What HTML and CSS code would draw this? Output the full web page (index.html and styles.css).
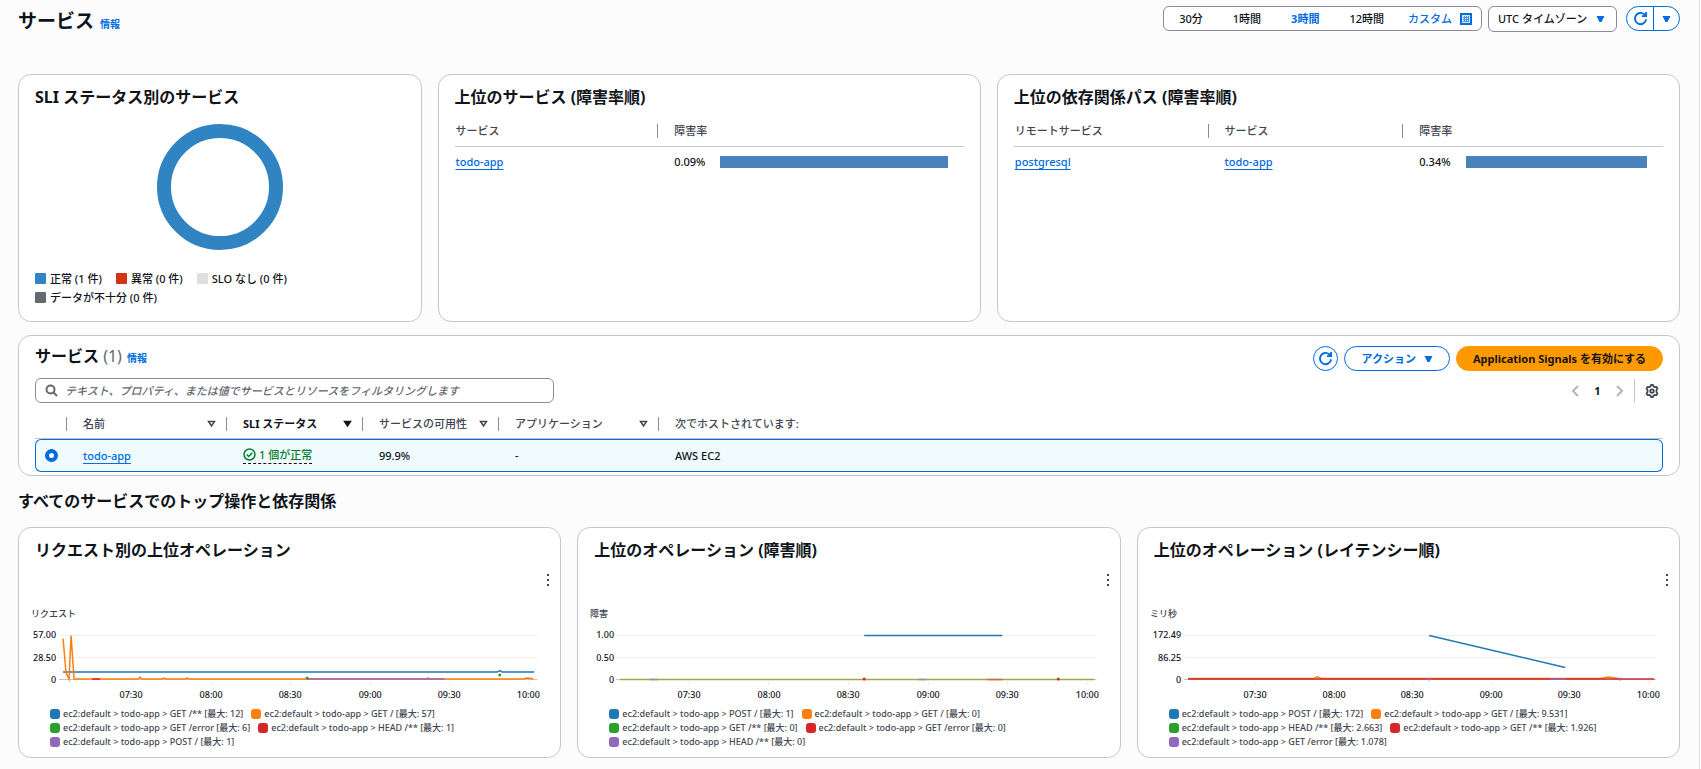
FILE: index.html
```html
<!DOCTYPE html>
<html lang="ja">
<head>
    <meta charset="UTF-8">
    <meta name="viewport" content="width=device-width, initial-scale=1.0">
    <title>サービス</title>
    <link rel="stylesheet" href="styles.css">
</head>
<body>
    <main class="page">
        <header class="topbar">
            <h1>サービス <a href="#" class="info">情報</a></h1>
            <div class="toolbar">
                <div class="segmented">
                    <button type="button">30分</button>
                    <button type="button">1時間</button>
                    <button type="button" class="active">3時間</button>
                    <button type="button">12時間</button>
                    <button type="button" class="custom">カスタム
                        <svg width="12" height="12" viewBox="0 0 12 12"><path d="M1 1h10v10H1z" fill="#d5e6fa" stroke="#006ce0" stroke-width="2"/><path d="M3 4.500h6M3 6.500h6M3 8.500h6M4.500 3v6M6.500 3v6M8.500 3v6" stroke="#4a94e8" fill="none"/></svg>
                    </button>
                </div>
                <div class="select">
                    <select aria-label="タイムゾーン">
                        <option>UTC タイムゾーン</option>
                    </select>
                    <svg class="caret" width="9" height="8" viewBox="0 0 9 8"><path d="M.5 1h8L5.500 7h-2z"/></svg>
                </div>
                <div class="split">
                    <button type="button" aria-label="更新">
                        <svg width="15" height="15" viewBox="0 0 16 16"><path d="M14 9a6 6 0 1 1-2-5.500L14 5.500M14 1v4.500H9.500"/></svg>
                    </button>
                    <button type="button" aria-label="更新間隔">
                        <svg class="caret" width="9" height="8" viewBox="0 0 9 8"><path d="M.5 1h8L5.500 7h-2z"/></svg>
                    </button>
                </div>
            </div>
        </header>

        <div class="grid summary">
            <section class="card span-3">
                <h2>SLI ステータス別のサービス</h2>
                <svg class="donut" width="126" height="126" viewBox="0 0 126 126"><circle cx="63" cy="63" r="56" fill="none" stroke="#3184c2" stroke-width="14"/></svg>
                <ul class="status-legend">
                    <li><i class="swatch ok"></i>正常 (1 件)</li>
                    <li><i class="swatch bad"></i>異常 (0 件)</li>
                    <li><i class="swatch none"></i>SLO なし (0 件)</li>
                    <li><i class="swatch missing"></i>データが不十分 (0 件)</li>
                </ul>
            </section>

            <section class="card span-4">
                <h2>上位のサービス (障害率順)</h2>
                <table class="mini">
                    <colgroup><col class="w40"><col></colgroup>
                    <thead>
                        <tr><th><div>サービス</div></th><th><div>障害率</div></th></tr>
                    </thead>
                    <tbody>
                        <tr>
                            <td><a href="#">todo-app</a></td>
                            <td><div class="rate">0.09%<span class="bar"></span></div></td>
                        </tr>
                    </tbody>
                </table>
            </section>

            <section class="card span-5">
                <h2>上位の依存関係パス (障害率順)</h2>
                <table class="mini">
                    <colgroup><col class="w30"><col class="w30"><col></colgroup>
                    <thead>
                        <tr><th><div>リモートサービス</div></th><th><div>サービス</div></th><th><div>障害率</div></th></tr>
                    </thead>
                    <tbody>
                        <tr>
                            <td><a href="#">postgresql</a></td>
                            <td><a href="#">todo-app</a></td>
                            <td><div class="rate">0.34%<span class="bar"></span></div></td>
                        </tr>
                    </tbody>
                </table>
            </section>
        </div>

        <section class="card services">
            <div class="services-head">
                <h2>サービス <span class="count">(1)</span> <a href="#" class="info">情報</a></h2>
                <div class="actions">
                    <button type="button" class="btn round" aria-label="更新">
                        <svg width="15" height="15" viewBox="0 0 16 16"><path d="M14 9a6 6 0 1 1-2-5.500L14 5.500M14 1v4.500H9.500"/></svg>
                    </button>
                    <button type="button" class="btn">アクション
                        <svg class="caret" width="9" height="8" viewBox="0 0 9 8"><path d="M.5 1h8L5.500 7h-2z"/></svg>
                    </button>
                    <button type="button" class="btn primary">Application Signals を有効にする</button>
                </div>
            </div>
            <div class="filter-row">
                <label class="search">
                    <svg width="13" height="13" viewBox="0 0 13 13"><circle cx="5.500" cy="5.500" r="4"/><path d="M8.500 8.500l3.500 3.500"/></svg>
                    <input type="text" aria-label="フィルター" placeholder="テキスト、プロパティ、または値でサービスとリソースをフィルタリングします">
                </label>
                <div class="pager">
                    <button type="button" class="arrow" aria-label="前へ"><svg width="8" height="12" viewBox="0 0 8 12"><path d="M7 1L2 6l5 5"/></svg></button>
                    <button type="button" class="current">1</button>
                    <button type="button" class="arrow" aria-label="次へ"><svg width="8" height="12" viewBox="0 0 8 12"><path d="M1 1l5 5-5 5"/></svg></button>
                    <button type="button" class="settings" aria-label="設定">
                        <svg width="14" height="14" viewBox="0 0 16 16"><path d="M6.300 2.600 7 1h2l.7 1.600 1.500.9 1.900-.2 1.100 1.900-1.100 1.600v2.400l1.100 1.600-1.100 1.900-1.900-.2-1.500.9L9 15H7l-.7-1.600-1.500-.9-1.900.2-1.100-1.900 1.100-1.600V6.800L1.800 5.200l1.100-1.900 1.900.2z"/><circle cx="8" cy="8" r="2"/></svg>
                    </button>
                </div>
            </div>
            <table class="services-table">
                <colgroup><col class="c-radio"><col class="c-wide"><col class="c-mid"><col class="c-mid"><col class="c-wide"><col></colgroup>
                <thead>
                    <tr>
                        <th><div></div></th>
                        <th><div>名前<svg class="sort" width="9" height="8" viewBox="0 0 9 8"><path d="M1.500 1.500h6L4.500 6z"/></svg></div></th>
                        <th class="sorted"><div>SLI ステータス<svg class="sort" width="9" height="8" viewBox="0 0 9 8"><path d="M1.500 1.500h6L4.500 6z"/></svg></div></th>
                        <th><div>サービスの可用性<svg class="sort" width="9" height="8" viewBox="0 0 9 8"><path d="M1.500 1.500h6L4.500 6z"/></svg></div></th>
                        <th><div>アプリケーション<svg class="sort" width="9" height="8" viewBox="0 0 9 8"><path d="M1.500 1.500h6L4.500 6z"/></svg></div></th>
                        <th><div>次でホストされています:</div></th>
                    </tr>
                </thead>
                <tbody>
                    <tr>
                        <td><input type="radio" name="service" aria-label="todo-app" checked></td>
                        <td><a href="#">todo-app</a></td>
                        <td><span class="status"><svg width="13" height="13" viewBox="0 0 13 13"><circle cx="6.500" cy="6.500" r="5.500"/><path d="M3.700 6.500l2 2 3.600-3.700"/></svg>1 個が正常</span></td>
                        <td>99.9%</td>
                        <td>-</td>
                        <td>AWS EC2</td>
                    </tr>
                </tbody>
            </table>
        </section>

        <h2 class="section-title">すべてのサービスでのトップ操作と依存関係</h2>

        <div class="grid charts">
            <section class="card span-4 chart-card">
                <h2>リクエスト別の上位オペレーション</h2>
                <button type="button" class="kebab" aria-label="メニュー"><i></i><i></i><i></i></button>
                <svg class="chart" viewBox="0 0 541 98">
                    <text class="unit" x="12" y="13">リクエスト</text>
                    <g class="y-axis"><text x="37" y="34">57.00</text><text x="37" y="57">28.50</text><text x="37" y="79">0</text></g>
                    <path class="gridline" d="M40 31.500h478M40 53.500h478"/>
                    <path class="baseline" d="M40 75.500h478"/>
                    <path class="gridline" d="M113.500 77v4M192.500 77v4M271.500 77v4M351.500 77v4M430.500 77v4M509.500 77v4"/>
                    <g class="x-axis"><text x="112" y="94">07:30</text><text x="192" y="94">08:00</text><text x="271" y="94">08:30</text><text x="351" y="94">09:00</text><text x="430" y="94">09:30</text><text x="509" y="94">10:00</text></g>
                    <path class="line blue" d="M44 68H478l2.500-1.500L483 68H515"/>
                    <path class="line orange" d="M44 34.500L47 69l3 6 2-43.500L55 75h64l2-2 2 2h20l2-1 2 1h19l2-1 2 1h237l2-1 2 1h93l3-1 5 .5 2 .5"/>
                    <path class="line red" d="M73 75h8"/>
                    <path class="line purple" d="M288 75h137"/>
                    <circle class="dot green" cx="288" cy="74" r="1.500"/>
                    <circle class="dot green" cx="480.500" cy="71" r="1.500"/>
                </svg>
                <ul class="chart-legend">
                    <li><i class="swatch blue"></i>ec2:default &gt; todo-app &gt; GET /** [最大: 12]</li>
                    <li><i class="swatch orange"></i>ec2:default &gt; todo-app &gt; GET / [最大: 57]</li>
                    <li><i class="swatch green"></i>ec2:default &gt; todo-app &gt; GET /error [最大: 6]</li>
                    <li><i class="swatch red"></i>ec2:default &gt; todo-app &gt; HEAD /** [最大: 1]</li>
                    <li><i class="swatch purple"></i>ec2:default &gt; todo-app &gt; POST / [最大: 1]</li>
                </ul>
            </section>

            <section class="card span-4 chart-card">
                <h2>上位のオペレーション (障害順)</h2>
                <button type="button" class="kebab" aria-label="メニュー"><i></i><i></i><i></i></button>
                <svg class="chart" viewBox="0 0 541 98">
                    <text class="unit" x="12" y="13">障害</text>
                    <g class="y-axis"><text x="36" y="34">1.00</text><text x="36" y="57">0.50</text><text x="36" y="79">0</text></g>
                    <path class="gridline" d="M38 31.500h480M38 53.500h480"/>
                    <path class="baseline" d="M38 75.500h480"/>
                    <path class="gridline" d="M111.500 77v4M190.500 77v4M270.500 77v4M350.500 77v4M429.500 77v4M509.500 77v4"/>
                    <g class="x-axis"><text x="111" y="94">07:30</text><text x="191" y="94">08:00</text><text x="270" y="94">08:30</text><text x="350" y="94">09:00</text><text x="429" y="94">09:30</text><text x="509" y="94">10:00</text></g>
                    <path class="line blue" d="M286 31.500h138"/>
                    <path class="line olive" d="M42 75.500h474"/>
                    <path class="line mauve" d="M72 75.500h8M340 75.500h8"/>
                    <path class="line rust" d="M409 75.500h15"/>
                    <circle class="dot red" cx="286" cy="75" r="1.500"/>
                    <circle class="dot red" cx="480" cy="75" r="1.500"/>
                </svg>
                <ul class="chart-legend">
                    <li><i class="swatch blue"></i>ec2:default &gt; todo-app &gt; POST / [最大: 1]</li>
                    <li><i class="swatch orange"></i>ec2:default &gt; todo-app &gt; GET / [最大: 0]</li>
                    <li><i class="swatch green"></i>ec2:default &gt; todo-app &gt; GET /** [最大: 0]</li>
                    <li><i class="swatch red"></i>ec2:default &gt; todo-app &gt; GET /error [最大: 0]</li>
                    <li><i class="swatch purple"></i>ec2:default &gt; todo-app &gt; HEAD /** [最大: 0]</li>
                </ul>
            </section>

            <section class="card span-4 chart-card">
                <h2>上位のオペレーション (レイテンシー順)</h2>
                <button type="button" class="kebab" aria-label="メニュー"><i></i><i></i><i></i></button>
                <svg class="chart" viewBox="0 0 541 98">
                    <text class="unit" x="12" y="13">ミリ秒</text>
                    <g class="y-axis"><text x="43" y="34">172.49</text><text x="43" y="57">86.25</text><text x="43" y="79">0</text></g>
                    <path class="gridline" d="M46 31.500h472M46 53.500h472"/>
                    <path class="baseline" d="M46 75.500h472"/>
                    <path class="gridline" d="M117.500 77v4M196.500 77v4M274.500 77v4M353.500 77v4M431.500 77v4M510.500 77v4"/>
                    <g class="x-axis"><text x="117" y="94">07:30</text><text x="196" y="94">08:00</text><text x="274" y="94">08:30</text><text x="353" y="94">09:00</text><text x="431" y="94">09:30</text><text x="510" y="94">10:00</text></g>
                    <path class="line blue" d="M291 31.500L427 63.500"/>
                    <path class="line orange" d="M50 74.500H176l3-2 4 2H462l8-1.500 10 1.500"/>
                    <path class="line red" d="M50 75h466"/>
                    <path class="line purple" d="M412 75h15"/>
                    <circle class="dot purple" cx="291" cy="75" r="1.500"/>
                    <circle class="dot purple" cx="482" cy="75" r="1.500"/>
                </svg>
                <ul class="chart-legend">
                    <li><i class="swatch blue"></i>ec2:default &gt; todo-app &gt; POST / [最大: 172]</li>
                    <li><i class="swatch orange"></i>ec2:default &gt; todo-app &gt; GET / [最大: 9.531]</li>
                    <li><i class="swatch green"></i>ec2:default &gt; todo-app &gt; HEAD /** [最大: 2.663]</li>
                    <li><i class="swatch red"></i>ec2:default &gt; todo-app &gt; GET /** [最大: 1.926]</li>
                    <li><i class="swatch purple"></i>ec2:default &gt; todo-app &gt; GET /error [最大: 1.078]</li>
                </ul>
            </section>
        </div>
    </main>
</body>
</html>
```
FILE: styles.css
```css
:root {
    --text: #0f141a;
    --muted: #424650;
    --blue: #006ce0;
    --border: #c6c6cd;
    --control: #8c8c94;
}

* {
    box-sizing: border-box;
}

body {
    margin: 0;
    background: #fcfcfc;
    color: var(--text);
    font-family: "Noto Sans", "Noto Sans CJK JP", sans-serif;
    font-size: 11px;
    font-weight: 500;
    line-height: 14px;
}

h1, h2, ul {
    margin: 0;
    padding: 0;
}

h1 {
    padding-top: 2px;
    font-size: 19px;
    line-height: 26px;
}

h2 {
    font-size: 16px;
    line-height: 20px;
}

ul {
    list-style: none;
}

button, select, input {
    font: inherit;
    color: inherit;
    margin: 0;
    padding: 0;
    border: 0;
    background: none;
}

a {
    color: var(--blue);
    text-underline-offset: 3px;
}

svg {
    display: block;
    fill: none;
    stroke: currentColor;
}

.caret {
    fill: var(--blue);
    stroke: none;
}

.info {
    margin-left: 1px;
    font-size: 10px;
    font-weight: 700;
    line-height: 14px;
    text-decoration: none;
}

.page {
    min-height: 100vh;
    margin-right: 1px;
    padding: 6px 19px 11px 18px;
    border-right: 1px solid #e4e4e8;
}

/* top bar */
.topbar {
    display: flex;
    justify-content: space-between;
    margin-bottom: 40px;
}

.toolbar {
    display: flex;
    align-items: flex-start;
}

.segmented {
    display: flex;
    height: 25px;
    margin-right: 6px;
    border: 1px solid var(--control);
    border-radius: 6px;
    background: #fff;
}

.segmented button {
    padding: 0 15px;
}

.segmented .active {
    color: var(--blue);
    font-weight: 700;
}

.segmented .custom {
    display: flex;
    align-items: center;
    gap: 8px;
    padding: 0 9px;
    color: var(--blue);
}

.select {
    position: relative;
    margin-right: 9px;
}

.select select {
    appearance: none;
    height: 26px;
    padding: 0 28px 0 9px;
    border: 1px solid var(--control);
    border-radius: 6px;
    background: #fff;
}

.select .caret {
    position: absolute;
    right: 12px;
    top: 9px;
    pointer-events: none;
}

.split {
    display: flex;
    height: 25px;
    border: 1px solid var(--blue);
    border-radius: 13px;
    color: var(--blue);
    background: #fff;
}

.split button {
    display: grid;
    place-items: center;
    width: 26px;
    stroke-width: 2;
}

.split button + button {
    border-left: 1px solid var(--blue);
}

/* cards */
.grid {
    display: grid;
    grid-template-columns: repeat(12, 1fr);
    gap: 16px;
}

.span-3 { grid-column: span 3; }
.span-4 { grid-column: span 4; }
.span-5 { grid-column: span 5; }

.card {
    min-width: 0;
    padding: 12px 16px 14px;
    border: 1px solid var(--border);
    border-radius: 13px;
    background: #fff;
}

.summary {
    margin-bottom: 13px;
}

.donut {
    margin: 17px auto 19px;
}

.status-legend {
    display: flex;
    flex-wrap: wrap;
    column-gap: 14px;
    line-height: 19px;
}

.status-legend li {
    display: flex;
    align-items: center;
    gap: 4px;
}

.swatch {
    width: 11px;
    height: 11px;
    border-radius: 1px;
}

.ok { background: #3184c2; }
.bad { background: #d13313; }
.none { background: #dedee3; }
.missing { background: #656871; }

/* tables */
table {
    width: 100%;
    border-spacing: 0;
    table-layout: fixed;
}

th, td {
    padding: 0 0 0 16px;
    text-align: left;
}

th {
    color: var(--muted);
    border-bottom: 1px solid var(--border);
    font-weight: 500;
}

th div {
    display: flex;
    align-items: center;
    justify-content: space-between;
    height: 14px;
    padding-right: 10px;
    border-right: 1px solid var(--control);
}

th:last-child div {
    border-right: 0;
}

.w40 { width: 40%; }
.w30 { width: 30%; }

.mini th {
    padding-top: 17px;
    padding-bottom: 8px;
}

.mini td {
    height: 30px;
}

.mini th:first-child,
.mini td:first-child {
    padding-left: 1px;
}

.rate {
    display: flex;
    align-items: center;
    gap: 15px;
    padding-right: 16px;
}

.bar {
    flex: 1;
    height: 12px;
    background: #4a82be;
}

/* services */
.services {
    padding: 10px 16px 3px;
}

.services-head,
.filter-row {
    display: flex;
    justify-content: space-between;
}

.actions,
.pager {
    display: flex;
    align-items: center;
}

.services-head {
    margin-bottom: 7px;
}

.count {
    color: #656871;
    font-weight: 400;
}

.actions {
    gap: 6px;
}

.btn {
    display: flex;
    align-items: center;
    justify-content: center;
    gap: 8px;
    height: 25px;
    padding: 0 16px;
    border: 1px solid var(--blue);
    border-radius: 13px;
    color: var(--blue);
    font-weight: 700;
}

.btn.round {
    width: 25px;
    padding: 0;
    stroke-width: 2;
}

.btn.primary {
    border-color: #ff9900;
    background: #ff9900;
    color: var(--text);
}

.search {
    display: flex;
    align-items: center;
    gap: 7px;
    flex: 0 1 519px;
    height: 25px;
    padding: 0 9px;
    border: 1px solid var(--control);
    border-radius: 6px;
    color: #656871;
    stroke-width: 2;
}

.search input {
    flex: 1;
    min-width: 0;
    outline: 0;
}

.search input::placeholder {
    color: #656871;
    font-style: italic;
    opacity: 1;
}

.arrow {
    color: #b4b4bb;
    stroke-width: 2;
}

.current {
    width: 37px;
    font-weight: 700;
}

.settings {
    height: 24px;
    margin-left: 10px;
    padding: 0 4px 0 10px;
    border-left: 1px solid var(--border);
    color: var(--muted);
    stroke-width: 2;
}

.services-table th {
    padding-top: 14px;
    padding-bottom: 7px;
    white-space: nowrap;
}

.services-table th:first-child {
    padding-left: 0;
}

.services-table .sorted {
    color: var(--text);
    font-weight: 700;
}

.sort {
    stroke-width: 1.5;
}

.sorted .sort {
    fill: currentColor;
}

.c-radio { width: 32px; }
.c-wide { width: 160px; }
.c-mid { width: 136px; }

.services-table td {
    height: 33px;
    border: 1px solid var(--blue);
    border-width: 1px 0;
    background: #f0fbff;
}

.services-table td:first-child {
    padding-left: 9px;
    border-left-width: 1px;
    border-radius: 6px 0 0 6px;
}

.services-table td:last-child {
    border-right-width: 1px;
    border-radius: 0 6px 6px 0;
}

input[type="radio"] {
    appearance: none;
    display: block;
    width: 13px;
    height: 13px;
    border: 4px solid var(--blue);
    border-radius: 50%;
    background: #fff;
}

.status {
    display: inline-flex;
    align-items: center;
    gap: 3px;
    padding-bottom: 1px;
    border-bottom: 1px dashed var(--text);
    color: #00802f;
    vertical-align: middle;
}

.status svg {
    stroke-width: 1.5;
}

.section-title {
    margin: 15px 0 16px;
}

/* charts */
.chart-card {
    display: flex;
    flex-direction: column;
    padding: 12px 0 8px;
}

.chart-card h2 {
    padding: 0 16px;
}

.kebab {
    display: flex;
    flex-direction: column;
    align-items: center;
    justify-content: center;
    gap: 3px;
    align-self: flex-end;
    width: 16px;
    height: 20px;
    margin: 10px 4px 14px;
}

.kebab i {
    width: 2px;
    height: 2px;
    background: var(--muted);
}

.chart {
    width: 100%;
    margin-bottom: 5px;
}

.chart text {
    fill: var(--text);
    stroke: none;
    font-size: 9px;
}

.chart .unit {
    fill: var(--muted);
}

.y-axis {
    text-anchor: end;
}

.x-axis {
    text-anchor: middle;
}

.gridline { stroke: #ededf0; }
.baseline { stroke: #c4c4c8; }

.line { stroke-width: 1.5; }
.line.blue { stroke: #1f77b4; }
.line.orange { stroke: #ff7f0e; }
.line.red { stroke: #d62728; }
.line.purple { stroke: #9467bd; }
.line.olive { stroke: #9aaa45; }
.line.mauve { stroke: #a08e94; }
.line.rust { stroke: #cf6a42; }

.dot { stroke: none; }
.dot.green { fill: #2ca02c; }
.dot.red { fill: #d62728; }
.dot.purple { fill: #9467bd; }

.chart-legend {
    display: flex;
    flex-wrap: wrap;
    column-gap: 8px;
    padding-left: 31px;
    color: var(--muted);
    font-size: 9px;
}

.chart-legend li {
    display: flex;
    align-items: center;
    gap: 3px;
}

.chart-legend .swatch {
    width: 10px;
    height: 10px;
    border-radius: 3px;
}

.swatch.blue { background: #1f77b4; }
.swatch.orange { background: #ff7f0e; }
.swatch.green { background: #2ca02c; }
.swatch.red { background: #d62728; }
.swatch.purple { background: #9467bd; }
```
